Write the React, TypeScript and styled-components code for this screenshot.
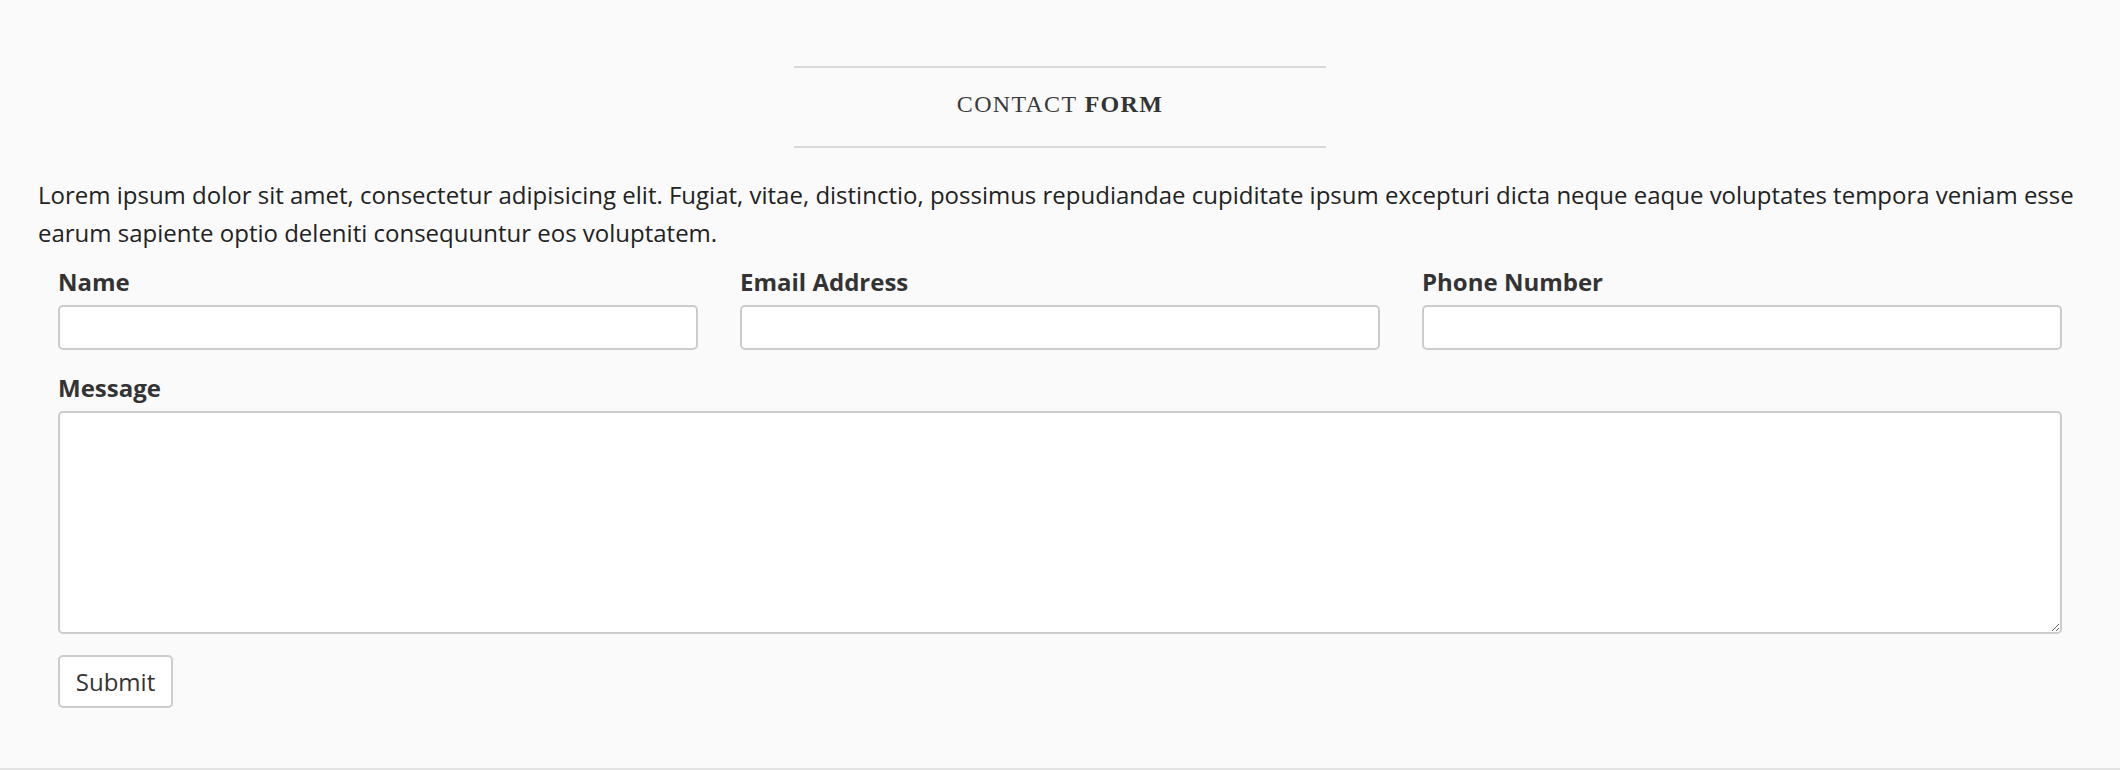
import styled, { createGlobalStyle } from "styled-components"

const GlobalStyle = createGlobalStyle`
  html, body {
    margin: 0;
    padding: 0;
    background: #fafafa;
  }
  body {
    font-family: "Open Sans", "Liberation Sans", sans-serif;
    color: #222;
  }
  * {
    box-sizing: border-box;
  }
`

const fields = [
  { id: "name", label: "Name", type: "text" },
  { id: "email", label: "Email Address", type: "email" },
  { id: "phone", label: "Phone Number", type: "tel" },
]

export default function App() {
  return (
    <>
      <GlobalStyle />
      <Section>
        <Heading>
          <Light>CONTACT</Light> <Strong>FORM</Strong>
        </Heading>
        <Intro>
          Lorem ipsum dolor sit amet, consectetur adipisicing elit. Fugiat,
          vitae, distinctio, possimus repudiandae cupiditate ipsum excepturi
          dicta neque eaque voluptates tempora veniam esse earum sapiente optio
          deleniti consequuntur eos voluptatem.
        </Intro>
        <Form onSubmit={(e) => e.preventDefault()}>
          <FieldRow>
            {fields.map((f) => (
              <Field key={f.id}>
                <Label htmlFor={f.id}>{f.label}</Label>
                <Input id={f.id} type={f.type} />
              </Field>
            ))}
          </FieldRow>
          <Field>
            <Label htmlFor="message">Message</Label>
            <TextArea id="message" />
          </Field>
          <div>
            <SubmitButton type="submit">Submit</SubmitButton>
          </div>
        </Form>
      </Section>
    </>
  )
}

const Section = styled.section`
  min-height: 770px;
  padding: 66px 38px 0;
  border-bottom: 2px solid #e3e3e3;
`

const Heading = styled.h2`
  width: 532px;
  margin: 0 auto;
  border-top: 2px solid #d9d9d9;
  border-bottom: 2px solid #d9d9d9;
  text-align: center;
  font-family: "Liberation Serif", "DejaVu Serif", serif;
  font-size: 24px;
  line-height: 72px;
  padding-bottom: 6px;
  letter-spacing: 1.3px;
  color: #333;
`

const Light = styled.span`
  font-weight: 400;
  color: #3a3a3a;
`

const Strong = styled.span`
  font-weight: 700;
`

const Intro = styled.p`
  margin: 28px 0 0;
  font-size: 24px;
  line-height: 38px;
  color: #222;
`

const Form = styled.form`
  display: flex;
  flex-direction: column;
  gap: 21px;
  padding: 13px 20px 0;
`

const FieldRow = styled.div`
  display: grid;
  grid-template-columns: repeat(3, 1fr);
  column-gap: 42px;
`

const Field = styled.div`
  display: flex;
  flex-direction: column;
`

const Label = styled.label`
  display: block;
  font-size: 24px;
  line-height: 34px;
  font-weight: 700;
  color: #333;
  margin-bottom: 6px;
`

const Input = styled.input`
  height: 45px;
  width: 100%;
  border: 2px solid #cccccc;
  border-radius: 5px;
  background: #fff;
  font: inherit;
  font-size: 22px;
  padding: 0 12px;
  outline: none;
`

const TextArea = styled.textarea`
  height: 223px;
  width: 100%;
  border: 2px solid #cccccc;
  border-radius: 5px;
  background: #fff;
  font: inherit;
  font-size: 22px;
  padding: 8px 12px;
  resize: vertical;
  outline: none;
`

const SubmitButton = styled.button`
  height: 53px;
  width: 115px;
  padding: 0;
  border: 2px solid #cccccc;
  border-radius: 5px;
  background: #fff;
  color: #333;
  font-family: "Open Sans", "Liberation Sans", sans-serif;
  font-size: 24px;
  cursor: pointer;
`
